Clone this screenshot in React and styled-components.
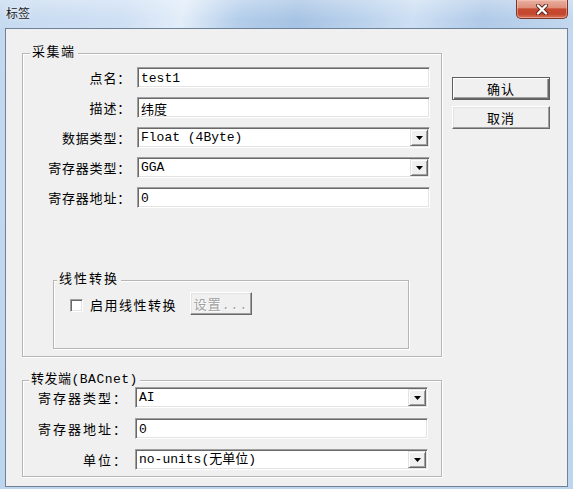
import React from 'react';
import styled, { createGlobalStyle, css } from 'styled-components';

const Global = createGlobalStyle`
  html, body { margin: 0; padding: 0; background: #ffffff; }
  body { font-family: "Noto Sans CJK SC", "Noto Sans", sans-serif; }
  * { box-sizing: border-box; }
`;

const CJK = `"Noto Sans CJK SC", "Noto Sans", sans-serif`;
const MONO = `"Liberation Mono", "Noto Sans CJK SC", monospace`;

const Window = styled.div`
  width: 573px;
  height: 489px;
  display: flex;
  flex-direction: column;
  overflow: hidden;
  background: linear-gradient(180deg, #c4d9f0 0%, #bed5ee 100%);
`;

const TitleBar = styled.div`
  height: 28px;
  flex: none;
  display: flex;
  justify-content: space-between;
  align-items: flex-start;
  padding: 0 5px 0 6px;
  background:
    linear-gradient(180deg, rgba(255, 255, 255, 0.28) 0%, rgba(255, 255, 255, 0) 70%),
    linear-gradient(100deg, #c6daf0 0%, #cfe0f4 22%, #e2edf9 32%, #b3cdea 42%, #a6c3e4 52%, #bcd3ed 64%, #cddff3 72%, #b0cae8 84%, #c3d8ef 100%);
`;

const Title = styled.span`
  margin-top: 5px;
  font-family: ${CJK};
  font-size: 12px;
  line-height: 16px;
  color: #1b1b1b;
  text-shadow: 0 0 5px rgba(255, 255, 255, 0.95);
`;

const CloseButton = styled.div`
  width: 52px;
  height: 19px;
  display: flex;
  align-items: center;
  justify-content: center;
  border: 1px solid #7a372a;
  border-top: none;
  border-radius: 0 0 5px 5px;
  background: linear-gradient(180deg, #e9b0a2 0%, #de907a 42%, #c64a31 50%, #c3462d 78%, #d9775d 100%);
  box-shadow: inset 0 0 0 1px rgba(255, 210, 200, 0.45);
`;

const Frame = styled.div`
  flex: 1;
  display: flex;
  padding: 0 5px 2px 5px;
`;

const Client = styled.div`
  flex: 1;
  display: flex;
  gap: 10px;
  padding: 17px 0 0 16px;
  background: #f0f0f0;
  border: 1px solid #6f8299;
`;

const LeftColumn = styled.div`
  width: 420px;
  display: flex;
  flex-direction: column;
`;

const RightColumn = styled.div`
  display: flex;
  flex-direction: column;
  gap: 6px;
  padding-top: 31px;
`;

const Group = styled.fieldset`
  margin: ${p => p.$margin || '0'};
  padding: 0;
  min-width: 0;
  width: ${p => p.$width}px;
  border: 1px solid #b6b6b6;
  box-shadow: inset 1px 1px #ffffff, 1px 1px #ffffff;
`;

const Legend = styled.legend`
  margin-left: ${p => p.$offset}px;
  padding: 0 2px;
  font-family: ${MONO};
  font-size: 13px;
  line-height: 14px;
  letter-spacing: ${p => p.$spacing}px;
  color: #000;
  background: #f0f0f0;
`;

const GroupBody = styled.div`
  display: flex;
  flex-direction: column;
  gap: ${p => p.$gap || 0}px;
  padding: ${p => p.$pad};
`;

const Row = styled.div`
  display: grid;
  grid-template-columns: ${p => p.$labelW}px ${p => p.$fieldW}px;
  column-gap: ${p => p.$colGap}px;
  align-items: center;
  height: 21px;
`;

const Label = styled.span`
  text-align: right;
  white-space: nowrap;
  font-family: ${CJK};
  font-size: 13px;
  line-height: 21px;
  letter-spacing: ${p => p.$spacing}px;
  color: #000;
`;

const sunken = css`
  height: 21px;
  border-style: solid;
  border-width: 1px;
  border-color: #a0a0a0 #ffffff #ffffff #a0a0a0;
  box-shadow: inset 1px 1px #696969, inset -1px -1px #e3e3e3;
  background: #ffffff;
`;

const TextBox = styled.input`
  ${sunken};
  width: 100%;
  margin: 0;
  padding: 1px 0 0 3px;
  outline: none;
  font-family: ${MONO};
  font-size: 13px;
  color: #000;
`;

const Combo = styled.div`
  ${sunken};
  display: flex;
  align-items: stretch;
  padding: 1px 1px 1px 3px;
`;

const ComboText = styled.span`
  flex: 1;
  font-family: ${MONO};
  font-size: 13px;
  line-height: 17px;
  color: #000;
  white-space: nowrap;
`;

const ArrowButton = styled.span`
  width: 18px;
  display: flex;
  align-items: center;
  justify-content: center;
  background: #f0f0f0;
  border-style: solid;
  border-width: 1px;
  border-color: #e3e3e3 #696969 #696969 #e3e3e3;
  box-shadow: inset 1px 1px #ffffff, inset -1px -1px #a0a0a0;
`;

const PushButton = styled.div`
  width: ${p => p.$width}px;
  height: 23px;
  display: flex;
  align-items: center;
  justify-content: center;
  background: #f0f0f0;
  font-family: ${p => (p.$mono ? MONO : CJK)};
  font-size: 13px;
  letter-spacing: 1px;
  color: ${p => (p.$disabled ? '#a0a0a0' : '#000')};
  text-shadow: ${p => (p.$disabled ? '1px 1px #ffffff' : 'none')};
  border-style: solid;
  border-width: 1px;
  border-color: ${p => (p.$default ? '#5e5e5e' : '#ffffff #696969 #696969 #ffffff')};
  box-shadow: ${p =>
    p.$default
      ? 'inset 1px 1px #ffffff, inset -1px -1px #696969, inset -2px -2px #a0a0a0'
      : 'inset -1px -1px #a0a0a0, inset 1px 1px #e3e3e3'};
`;

const CheckRow = styled.div`
  display: flex;
  align-items: center;
  padding: 5px 0 33px 16px;
`;

const CheckBox = styled.span`
  width: 13px;
  height: 13px;
  margin-top: 3px;
  border-style: solid;
  border-width: 1px;
  border-color: #a0a0a0 #ffffff #ffffff #a0a0a0;
  box-shadow: inset 1px 1px #696969, inset -1px -1px #e3e3e3;
  background: #ffffff;
`;

const CheckLabel = styled.span`
  margin-left: 7px;
  margin-right: 13px;
  margin-top: 1px;
  font-family: ${CJK};
  font-size: 13px;
  letter-spacing: 1.5px;
  color: #000;
`;

const CloseIcon = () => (
  <svg width="14" height="11" viewBox="0 0 14 11">
    <path d="M3 1.5 L11 9.5 M11 1.5 L3 9.5" stroke="#5a2418" strokeWidth="4" strokeLinecap="round" />
    <path d="M3 1.5 L11 9.5 M11 1.5 L3 9.5" stroke="#ffffff" strokeWidth="2.4" strokeLinecap="round" />
  </svg>
);

const DownArrow = () => (
  <svg width="7" height="4" viewBox="0 0 7 4">
    <path d="M0 0 H7 L3.5 4 Z" fill="#000" />
  </svg>
);

function Field({ label, value, combo, labelW, fieldW, colGap, spacing }) {
  return (
    <Row $labelW={labelW} $fieldW={fieldW} $colGap={colGap}>
      <Label $spacing={spacing}>{label}</Label>
      {combo ? (
        <Combo>
          <ComboText>{value}</ComboText>
          <ArrowButton>
            <DownArrow />
          </ArrowButton>
        </Combo>
      ) : (
        <TextBox readOnly value={value} />
      )}
    </Row>
  );
}

const collectFields = [
  { label: '点名：', value: 'test1' },
  { label: '描述：', value: '纬度' },
  { label: '数据类型：', value: 'Float (4Byte)', combo: true },
  { label: '寄存器类型：', value: 'GGA', combo: true },
  { label: '寄存器地址：', value: '0' },
];

const forwardFields = [
  { label: '寄存器类型：', value: 'AI', combo: true },
  { label: '寄存器地址：', value: '0' },
  { label: '单位：', value: 'no-units(无单位)', combo: true },
];

export default function App() {
  return (
    <>
      <Global />
      <Window>
        <TitleBar>
          <Title>标签</Title>
          <CloseButton>
            <CloseIcon />
          </CloseButton>
        </TitleBar>
        <Frame>
          <Client>
            <LeftColumn>
              <Group $width={420}>
                <Legend $offset={7} $spacing={1.5}>采集端</Legend>
                <GroupBody $gap={9} $pad="7px 0 0 0">
                  {collectFields.map(f => (
                    <Field key={f.label} {...f} labelW={108} fieldW={293} colGap={6} spacing={0.8} />
                  ))}
                </GroupBody>
                <Group $width={356} $margin="65px 0 7px 30px">
                  <Legend $offset={3} $spacing={2}>线性转换</Legend>
                  <CheckRow>
                    <CheckBox />
                    <CheckLabel>启用线性转换</CheckLabel>
                    <PushButton $width={62} $disabled $mono>设置...</PushButton>
                  </CheckRow>
                </Group>
              </Group>
              <Group $width={420} $margin="16px 0 0 0">
                <Legend $offset={6} $spacing={0.5}>转发端(BACnet)</Legend>
                <GroupBody $gap={10} $pad="0 0 6px 0">
                  {forwardFields.map(f => (
                    <Field key={f.label} {...f} labelW={105} fieldW={293} colGap={7} spacing={2} />
                  ))}
                </GroupBody>
              </Group>
            </LeftColumn>
            <RightColumn>
              <PushButton $width={98} $default>确认</PushButton>
              <PushButton $width={98}>取消</PushButton>
            </RightColumn>
          </Client>
        </Frame>
      </Window>
    </>
  );
}
